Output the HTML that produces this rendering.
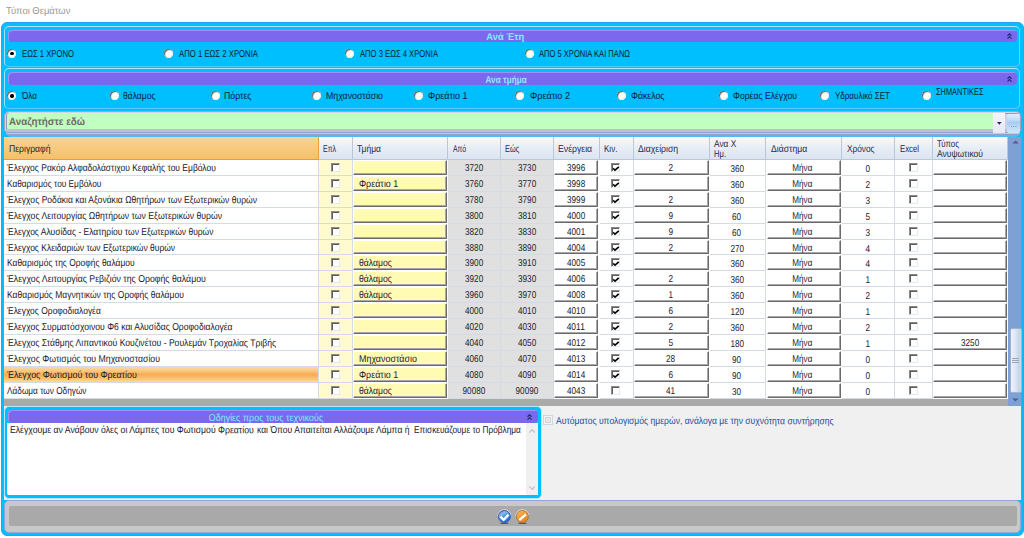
<!DOCTYPE html>
<html lang="el"><head><meta charset="utf-8"><title>Τύποι Θεμάτων</title>
<style>
html,body{margin:0;padding:0;background:#fff;}
body{width:1024px;height:538px;position:relative;overflow:hidden;font-family:"Liberation Sans",sans-serif;font-size:10px;color:#20202e;}
div{box-sizing:border-box;}
.abs,.th,.c,.cb,.rd,.t{position:absolute;}
.t{white-space:nowrap;transform-origin:0 0;line-height:12px;}
#frame{left:1px;top:22.3px;width:1022.6px;height:514px;background:#00bfff;border:1px solid #2aa5e8;border-radius:6px;}
.grp{border:1px solid;border-color:#b2e5fa #74d1f6 #58c9f5 #a2dff9;border-radius:5px;}
.hdr{background:#7b68ee;border-radius:4px;box-shadow:inset 1px 1px 0 rgba(255,255,255,.28);}
.chev{position:absolute;}
.rd{width:9px;height:9px;border-radius:50%;background:#fff;box-shadow:inset 1px 1px 1px #5a5a5a,inset -1px -1px 1px #f0f0f0;}
.rd i{position:absolute;left:3px;top:3px;width:3.4px;height:3.4px;border-radius:50%;background:#000;}
#search{left:4px;top:110.5px;width:1017px;height:23.5px;border:1px solid #9ea3bf;border-radius:5px;background:#cdd1e4;box-shadow:inset 0 0 0 1px #d3d6e7,inset 0 0 0 2px #969cbc;}
#gridbg{left:4px;top:136.8px;width:1017.3px;height:268.9px;background:#aaa;}
.th{background:linear-gradient(#f7f9fc,#e4ebf5 60%,#dbe4f0);border-right:1px solid #b9c7da;border-bottom:1px solid #b9c7da;}
.th.first{background:linear-gradient(#f9d295,#f7ca7f 50%,#f5c16a);border-right:1px solid #ee9c40;border-bottom:1px solid #ec9a3c;}
.c{background:#fff;border-right:1px solid #d5dbe6;border-bottom:1px solid #d5dbe6;}
.c.yel{background:#fffbcf;}
.c.gray{background:#e0e0e0;}
.c.btn{background:#fff;border:1px solid;border-color:#fff #6a6a6a #6a6a6a #fff;box-shadow:inset -1px -1px 0 #a8a8a8;}
.c.ybtn{background:#fffab4;}
.c.sel{background:linear-gradient(#fad9a4,#f9c67e 28%,#f7ab52 50%,#f8bf68 72%,#fbdc93);}
.cb{width:9.3px;height:9px;background:#fff;border:1px solid;border-color:#8c8c8c #e8e8e8 #e8e8e8 #8c8c8c;box-shadow:inset 1px 1px 0 #5c5c5c;}
.cb svg{position:absolute;left:0px;top:1.8px;}
</style></head><body>
<div id="frame" class="abs"></div>
<div class="abs grp" style="left:4px;top:25.8px;width:1016px;height:41px"></div>
<div class="abs hdr" style="left:7.8px;top:30.2px;width:1009px;height:11.6px"></div>
<div class="rd" style="left:7.2px;top:48.8px"><i></i></div><span class="t" style="top:48.4px;font-size:10px;line-height:11px;color:#06222e;left:21.7px;transform:scaleX(0.7695) rotate(0.03deg);">ΕΩΣ 1 ΧΡΟΝΟ</span>
<div class="rd" style="left:164.2px;top:48.8px"></div><span class="t" style="top:48.4px;font-size:10px;line-height:11px;color:#06222e;left:178.7px;transform:scaleX(0.7743) rotate(0.03deg);">ΑΠΟ 1 ΕΩΣ 2 ΧΡΟΝΙΑ</span>
<div class="rd" style="left:345.2px;top:48.8px"></div><span class="t" style="top:48.4px;font-size:10px;line-height:11px;color:#06222e;left:359.7px;transform:scaleX(0.7645) rotate(0.03deg);">ΑΠΟ 3 ΕΩΣ 4 ΧΡΟΝΙΑ</span>
<div class="rd" style="left:525.2px;top:48.8px"></div><span class="t" style="top:48.4px;font-size:10px;line-height:11px;color:#06222e;left:539.0px;transform:scaleX(0.7565) rotate(0.03deg);">ΑΠΟ 5 ΧΡΟΝΙΑ ΚΑΙ ΠΑΝΩ</span>
<div class="abs grp" style="left:4px;top:68.3px;width:1016px;height:40.5px"></div>
<div class="abs hdr" style="left:7.8px;top:72.3px;width:1009px;height:12.3px"></div>
<div class="rd" style="left:7.2px;top:91.3px"><i></i></div><span class="t" style="top:89.8px;font-size:10px;line-height:11px;color:#06222e;left:21.7px;transform:scaleX(0.8163) rotate(0.03deg);">Όλα</span>
<div class="rd" style="left:109.5px;top:91.3px"></div><span class="t" style="top:89.8px;font-size:10px;line-height:11px;color:#06222e;left:123.45px;transform:scaleX(0.8525) rotate(0.03deg);">θάλαμος</span>
<div class="rd" style="left:210.7px;top:91.3px"></div><span class="t" style="top:89.8px;font-size:10px;line-height:11px;color:#06222e;left:224.2px;transform:scaleX(0.8713) rotate(0.03deg);">Πόρτες</span>
<div class="rd" style="left:312.09999999999997px;top:91.3px"></div><span class="t" style="top:89.8px;font-size:10px;line-height:11px;color:#06222e;left:325.7px;transform:scaleX(0.8778) rotate(0.03deg);">Μηχανοστάσιο</span>
<div class="rd" style="left:413.7px;top:91.3px"></div><span class="t" style="top:89.8px;font-size:10px;line-height:11px;color:#06222e;left:428.2px;transform:scaleX(0.8980) rotate(0.03deg);">Φρεάτιο 1</span>
<div class="rd" style="left:515.3000000000001px;top:91.3px"></div><span class="t" style="top:89.8px;font-size:10px;line-height:11px;color:#06222e;left:529.7px;transform:scaleX(0.9094) rotate(0.03deg);">Φρεάτιο 2</span>
<div class="rd" style="left:616.7px;top:91.3px"></div><span class="t" style="top:89.8px;font-size:10px;line-height:11px;color:#06222e;left:631.2px;transform:scaleX(0.8712) rotate(0.03deg);">Φάκελος</span>
<div class="rd" style="left:718.5px;top:91.3px"></div><span class="t" style="top:89.8px;font-size:10px;line-height:11px;color:#06222e;left:732.7px;transform:scaleX(0.8623) rotate(0.03deg);">Φορέας Ελέγχου</span>
<div class="rd" style="left:820.2px;top:91.3px"></div><span class="t" style="top:89.8px;font-size:10px;line-height:11px;color:#06222e;left:834.7px;transform:scaleX(0.8020) rotate(0.03deg);">Υδραυλικό ΣΕΤ</span>
<div class="rd" style="left:921.9000000000001px;top:91.3px"></div><span class="t" style="top:86.3px;font-size:10px;line-height:11px;color:#06222e;left:935.9000000000001px;transform:scaleX(0.7416) rotate(0.03deg);">ΣΗΜΑΝΤΙΚΕΣ</span>
<div id="search" class="abs"></div>
<div class="abs" style="left:6.8px;top:113.3px;width:986.7px;height:15.7px;background:#c1ffc1;border-radius:3px 0 0 3px"></div>
<div class="abs" style="left:5.5px;top:128.9px;width:1014.5px;height:7.9px;border-radius:0 0 5px 5px;background:linear-gradient(#b9c0da 0,#b9c0da 33%,#8ea2d4 35%,#8ea2d4 51%,#c3c9de 53%,#c3c9de 66%,#8ea2d4 68%,#8ea2d4 80%,#5cbdec 90%,#2cc1f8 100%)"></div>
<div id="gridbg" class="abs"></div>
<div class="abs" style="left:4px;top:160px;width:1004px;height:238.5px;background:#fff"></div>
<div class="th first" style="left:4px;top:136.8px;width:315px;height:23.19999999999999px;"></div>
<span class="t" style="top:143.0px;font-size:10px;line-height:11px;color:#2a2222;left:8.7px;transform:scaleX(0.8626) rotate(0.03deg);">Περιγραφή</span>
<div class="th" style="left:319px;top:136.8px;width:34px;height:23.19999999999999px;"></div>
<span class="t" style="top:143.0px;font-size:10px;line-height:11px;color:#1c2a4a;left:323px;transform:scaleX(0.6997) rotate(0.03deg);">Επλ</span>
<div class="th" style="left:353px;top:136.8px;width:95px;height:23.19999999999999px;"></div>
<span class="t" style="top:143.0px;font-size:10px;line-height:11px;color:#1c2a4a;left:357px;transform:scaleX(0.8496) rotate(0.03deg);">Τμήμα</span>
<div class="th" style="left:448px;top:136.8px;width:52.5px;height:23.19999999999999px;"></div>
<span class="t" style="top:143.0px;font-size:10px;line-height:11px;color:#1c2a4a;left:452.7px;transform:scaleX(0.6844) rotate(0.03deg);">Από</span>
<div class="th" style="left:500.5px;top:136.8px;width:53.0px;height:23.19999999999999px;"></div>
<span class="t" style="top:143.0px;font-size:10px;line-height:11px;color:#1c2a4a;left:505.4px;transform:scaleX(0.7411) rotate(0.03deg);">Εώς</span>
<div class="th" style="left:553.5px;top:136.8px;width:46.200000000000045px;height:23.19999999999999px;"></div>
<span class="t" style="top:143.0px;font-size:10px;line-height:11px;color:#1c2a4a;left:558.2px;transform:scaleX(0.8681) rotate(0.03deg);">Ενέργεια</span>
<div class="th" style="left:599.7px;top:136.8px;width:34.299999999999955px;height:23.19999999999999px;"></div>
<span class="t" style="top:143.0px;font-size:10px;line-height:11px;color:#1c2a4a;left:603.7px;transform:scaleX(0.8037) rotate(0.03deg);">Κιν.</span>
<div class="th" style="left:634px;top:136.8px;width:76px;height:23.19999999999999px;"></div>
<span class="t" style="top:143.0px;font-size:10px;line-height:11px;color:#1c2a4a;left:638.2px;transform:scaleX(0.8689) rotate(0.03deg);">Διαχείριση</span>
<div class="th" style="left:710px;top:136.8px;width:56.200000000000045px;height:23.19999999999999px;"></div>
<span class="t" style="top:137.60000000000002px;font-size:10px;line-height:11px;color:#1c2a4a;left:714px;transform:scaleX(0.8309) rotate(0.03deg);">Ανα Χ</span>
<span class="t" style="top:148.10000000000002px;font-size:10px;line-height:11px;color:#1c2a4a;left:714px;transform:scaleX(0.7611) rotate(0.03deg);">Ημ.</span>
<div class="th" style="left:766.2px;top:136.8px;width:75.79999999999995px;height:23.19999999999999px;"></div>
<span class="t" style="top:143.0px;font-size:10px;line-height:11px;color:#1c2a4a;left:771px;transform:scaleX(0.8659) rotate(0.03deg);">Διάστημα</span>
<div class="th" style="left:842px;top:136.8px;width:53.299999999999955px;height:23.19999999999999px;"></div>
<span class="t" style="top:143.0px;font-size:10px;line-height:11px;color:#1c2a4a;left:846.7px;transform:scaleX(0.8255) rotate(0.03deg);">Χρόνος</span>
<div class="th" style="left:895.3px;top:136.8px;width:37.700000000000045px;height:23.19999999999999px;"></div>
<span class="t" style="top:143.0px;font-size:10px;line-height:11px;color:#1c2a4a;left:900px;transform:scaleX(0.7770) rotate(0.03deg);">Excel</span>
<div class="th" style="left:933px;top:136.8px;width:75.39999999999998px;height:23.19999999999999px;"></div>
<span class="t" style="top:137.60000000000002px;font-size:10px;line-height:11px;color:#1c2a4a;left:937px;transform:scaleX(0.7897) rotate(0.03deg);">Τύπος</span>
<span class="t" style="top:148.10000000000002px;font-size:10px;line-height:11px;color:#1c2a4a;left:937px;transform:scaleX(0.8543) rotate(0.03deg);">Ανυψωτικού</span>
<div class="c desc" style="left:4px;top:160px;width:315px;height:16px;"></div>
<div class="c yel" style="left:319px;top:160px;width:34px;height:16px;"></div>
<div class="c btn ybtn" style="left:353.3px;top:160.2px;width:93.39999999999998px;height:15.100000000000023px;"></div>
<div class="c gray" style="left:448px;top:160px;width:52.5px;height:16px;"></div>
<div class="c gray" style="left:500.5px;top:160px;width:53.0px;height:16px;"></div>
<div class="c btn" style="left:553.8px;top:160.2px;width:44.600000000000136px;height:15.100000000000023px;"></div>
<div class="c" style="left:599.7px;top:160px;width:34.299999999999955px;height:16px;"></div>
<div class="c btn" style="left:634.3px;top:160.2px;width:74.40000000000009px;height:15.100000000000023px;"></div>
<div class="c" style="left:710px;top:160px;width:56.200000000000045px;height:16px;"></div>
<div class="c btn" style="left:766.5px;top:160.2px;width:74.20000000000005px;height:15.100000000000023px;"></div>
<div class="c" style="left:842px;top:160px;width:53.299999999999955px;height:16px;"></div>
<div class="c" style="left:895.3px;top:160px;width:37.700000000000045px;height:16px;"></div>
<div class="c btn" style="left:933.3px;top:160.2px;width:73.80000000000007px;height:15.100000000000023px;"></div>
<span class="t" style="top:162.1px;font-size:10px;line-height:11px;left:7.2px;transform:scaleX(0.8477) rotate(0.03deg);">Έλεγχος Ρακόρ Αλφαδολάστιχου Κεφαλής του Εμβόλου</span>
<span class="t" style="top:162.4px;font-size:10px;line-height:11px;left:463.18px;transform-origin:50% 0;transform:scaleX(0.8180) rotate(0.03deg);">3720</span>
<span class="t" style="top:162.4px;font-size:10px;line-height:11px;left:516.17px;transform-origin:50% 0;transform:scaleX(0.8180) rotate(0.03deg);">3730</span>
<span class="t" style="top:161.9px;font-size:10px;line-height:11px;left:565.08px;transform-origin:50% 0;transform:scaleX(0.8180) rotate(0.03deg);">3996</span>
<span class="t" style="top:161.9px;font-size:10px;line-height:11px;left:667.82px;transform-origin:50% 0;transform:scaleX(0.8180) rotate(0.03deg);">2</span>
<span class="t" style="top:162.79999999999998px;font-size:10px;line-height:11px;left:728.66px;transform-origin:50% 0;transform:scaleX(0.8180) rotate(0.03deg);">360</span>
<span class="t" style="top:162.29999999999998px;font-size:10px;line-height:11px;left:790.16px;transform-origin:50% 0;transform:scaleX(0.8101) rotate(0.03deg);">Μήνα</span>
<span class="t" style="top:162.79999999999998px;font-size:10px;line-height:11px;left:865.22px;transform-origin:50% 0;transform:scaleX(0.8180) rotate(0.03deg);">0</span>
<div class="cb" style="left:330.5px;top:163px"></div>
<div class="cb" style="left:611px;top:163px"><svg width="7.6" height="6" viewBox="0 0 7.6 6"><path d="M1.2 2.4 L3 4.2 L6.8 0.8" stroke="#000" stroke-width="1.6" fill="none"/></svg></div>
<div class="cb" style="left:908.5px;top:163px"></div>
<div class="c desc" style="left:4px;top:176px;width:315px;height:16px;"></div>
<div class="c yel" style="left:319px;top:176px;width:34px;height:16px;"></div>
<div class="c btn ybtn" style="left:353.3px;top:176.2px;width:93.39999999999998px;height:15.100000000000023px;"></div>
<div class="c gray" style="left:448px;top:176px;width:52.5px;height:16px;"></div>
<div class="c gray" style="left:500.5px;top:176px;width:53.0px;height:16px;"></div>
<div class="c btn" style="left:553.8px;top:176.2px;width:44.600000000000136px;height:15.100000000000023px;"></div>
<div class="c" style="left:599.7px;top:176px;width:34.299999999999955px;height:16px;"></div>
<div class="c btn" style="left:634.3px;top:176.2px;width:74.40000000000009px;height:15.100000000000023px;"></div>
<div class="c" style="left:710px;top:176px;width:56.200000000000045px;height:16px;"></div>
<div class="c btn" style="left:766.5px;top:176.2px;width:74.20000000000005px;height:15.100000000000023px;"></div>
<div class="c" style="left:842px;top:176px;width:53.299999999999955px;height:16px;"></div>
<div class="c" style="left:895.3px;top:176px;width:37.700000000000045px;height:16px;"></div>
<div class="c btn" style="left:933.3px;top:176.2px;width:73.80000000000007px;height:15.100000000000023px;"></div>
<span class="t" style="top:178.1px;font-size:10px;line-height:11px;left:7.2px;transform:scaleX(0.8291) rotate(0.03deg);">Καθαρισμός του Εμβόλου</span>
<span class="t" style="top:178.0px;font-size:10px;line-height:11px;left:358.5px;transform:scaleX(0.8935) rotate(0.03deg);">Φρεάτιο 1</span>
<span class="t" style="top:178.4px;font-size:10px;line-height:11px;left:463.18px;transform-origin:50% 0;transform:scaleX(0.8180) rotate(0.03deg);">3760</span>
<span class="t" style="top:178.4px;font-size:10px;line-height:11px;left:516.17px;transform-origin:50% 0;transform:scaleX(0.8180) rotate(0.03deg);">3770</span>
<span class="t" style="top:177.9px;font-size:10px;line-height:11px;left:565.08px;transform-origin:50% 0;transform:scaleX(0.8180) rotate(0.03deg);">3998</span>
<span class="t" style="top:178.79999999999998px;font-size:10px;line-height:11px;left:728.66px;transform-origin:50% 0;transform:scaleX(0.8180) rotate(0.03deg);">360</span>
<span class="t" style="top:178.29999999999998px;font-size:10px;line-height:11px;left:790.16px;transform-origin:50% 0;transform:scaleX(0.8101) rotate(0.03deg);">Μήνα</span>
<span class="t" style="top:178.79999999999998px;font-size:10px;line-height:11px;left:865.22px;transform-origin:50% 0;transform:scaleX(0.8180) rotate(0.03deg);">2</span>
<div class="cb" style="left:330.5px;top:179px"></div>
<div class="cb" style="left:611px;top:179px"><svg width="7.6" height="6" viewBox="0 0 7.6 6"><path d="M1.2 2.4 L3 4.2 L6.8 0.8" stroke="#000" stroke-width="1.6" fill="none"/></svg></div>
<div class="cb" style="left:908.5px;top:179px"></div>
<div class="c desc" style="left:4px;top:192px;width:315px;height:16px;"></div>
<div class="c yel" style="left:319px;top:192px;width:34px;height:16px;"></div>
<div class="c btn ybtn" style="left:353.3px;top:192.2px;width:93.39999999999998px;height:15.100000000000023px;"></div>
<div class="c gray" style="left:448px;top:192px;width:52.5px;height:16px;"></div>
<div class="c gray" style="left:500.5px;top:192px;width:53.0px;height:16px;"></div>
<div class="c btn" style="left:553.8px;top:192.2px;width:44.600000000000136px;height:15.100000000000023px;"></div>
<div class="c" style="left:599.7px;top:192px;width:34.299999999999955px;height:16px;"></div>
<div class="c btn" style="left:634.3px;top:192.2px;width:74.40000000000009px;height:15.100000000000023px;"></div>
<div class="c" style="left:710px;top:192px;width:56.200000000000045px;height:16px;"></div>
<div class="c btn" style="left:766.5px;top:192.2px;width:74.20000000000005px;height:15.100000000000023px;"></div>
<div class="c" style="left:842px;top:192px;width:53.299999999999955px;height:16px;"></div>
<div class="c" style="left:895.3px;top:192px;width:37.700000000000045px;height:16px;"></div>
<div class="c btn" style="left:933.3px;top:192.2px;width:73.80000000000007px;height:15.100000000000023px;"></div>
<span class="t" style="top:194.1px;font-size:10px;line-height:11px;left:7.2px;transform:scaleX(0.8567) rotate(0.03deg);">Έλεγχος Ροδάκια και Αξονάκια Ωθητήρων των Εξωτερικών θυρών</span>
<span class="t" style="top:194.4px;font-size:10px;line-height:11px;left:463.18px;transform-origin:50% 0;transform:scaleX(0.8180) rotate(0.03deg);">3780</span>
<span class="t" style="top:194.4px;font-size:10px;line-height:11px;left:516.17px;transform-origin:50% 0;transform:scaleX(0.8180) rotate(0.03deg);">3790</span>
<span class="t" style="top:193.9px;font-size:10px;line-height:11px;left:565.08px;transform-origin:50% 0;transform:scaleX(0.8180) rotate(0.03deg);">3999</span>
<span class="t" style="top:193.9px;font-size:10px;line-height:11px;left:667.82px;transform-origin:50% 0;transform:scaleX(0.8180) rotate(0.03deg);">2</span>
<span class="t" style="top:194.79999999999998px;font-size:10px;line-height:11px;left:728.66px;transform-origin:50% 0;transform:scaleX(0.8180) rotate(0.03deg);">360</span>
<span class="t" style="top:194.29999999999998px;font-size:10px;line-height:11px;left:790.16px;transform-origin:50% 0;transform:scaleX(0.8101) rotate(0.03deg);">Μήνα</span>
<span class="t" style="top:194.79999999999998px;font-size:10px;line-height:11px;left:865.22px;transform-origin:50% 0;transform:scaleX(0.8180) rotate(0.03deg);">3</span>
<div class="cb" style="left:330.5px;top:195px"></div>
<div class="cb" style="left:611px;top:195px"><svg width="7.6" height="6" viewBox="0 0 7.6 6"><path d="M1.2 2.4 L3 4.2 L6.8 0.8" stroke="#000" stroke-width="1.6" fill="none"/></svg></div>
<div class="cb" style="left:908.5px;top:195px"></div>
<div class="c desc" style="left:4px;top:208px;width:315px;height:16px;"></div>
<div class="c yel" style="left:319px;top:208px;width:34px;height:16px;"></div>
<div class="c btn ybtn" style="left:353.3px;top:208.2px;width:93.39999999999998px;height:15.100000000000023px;"></div>
<div class="c gray" style="left:448px;top:208px;width:52.5px;height:16px;"></div>
<div class="c gray" style="left:500.5px;top:208px;width:53.0px;height:16px;"></div>
<div class="c btn" style="left:553.8px;top:208.2px;width:44.600000000000136px;height:15.100000000000023px;"></div>
<div class="c" style="left:599.7px;top:208px;width:34.299999999999955px;height:16px;"></div>
<div class="c btn" style="left:634.3px;top:208.2px;width:74.40000000000009px;height:15.100000000000023px;"></div>
<div class="c" style="left:710px;top:208px;width:56.200000000000045px;height:16px;"></div>
<div class="c btn" style="left:766.5px;top:208.2px;width:74.20000000000005px;height:15.100000000000023px;"></div>
<div class="c" style="left:842px;top:208px;width:53.299999999999955px;height:16px;"></div>
<div class="c" style="left:895.3px;top:208px;width:37.700000000000045px;height:16px;"></div>
<div class="c btn" style="left:933.3px;top:208.2px;width:73.80000000000007px;height:15.100000000000023px;"></div>
<span class="t" style="top:210.1px;font-size:10px;line-height:11px;left:7.2px;transform:scaleX(0.8660) rotate(0.03deg);">Έλεγχος Λειτουργίας Ωθητήρων των Εξωτερικών θυρών</span>
<span class="t" style="top:210.4px;font-size:10px;line-height:11px;left:463.18px;transform-origin:50% 0;transform:scaleX(0.8180) rotate(0.03deg);">3800</span>
<span class="t" style="top:210.4px;font-size:10px;line-height:11px;left:516.17px;transform-origin:50% 0;transform:scaleX(0.8180) rotate(0.03deg);">3810</span>
<span class="t" style="top:209.9px;font-size:10px;line-height:11px;left:565.08px;transform-origin:50% 0;transform:scaleX(0.8180) rotate(0.03deg);">4000</span>
<span class="t" style="top:209.9px;font-size:10px;line-height:11px;left:667.82px;transform-origin:50% 0;transform:scaleX(0.8180) rotate(0.03deg);">9</span>
<span class="t" style="top:210.79999999999998px;font-size:10px;line-height:11px;left:731.44px;transform-origin:50% 0;transform:scaleX(0.8180) rotate(0.03deg);">60</span>
<span class="t" style="top:210.29999999999998px;font-size:10px;line-height:11px;left:790.16px;transform-origin:50% 0;transform:scaleX(0.8101) rotate(0.03deg);">Μήνα</span>
<span class="t" style="top:210.79999999999998px;font-size:10px;line-height:11px;left:865.22px;transform-origin:50% 0;transform:scaleX(0.8180) rotate(0.03deg);">5</span>
<div class="cb" style="left:330.5px;top:211px"></div>
<div class="cb" style="left:611px;top:211px"><svg width="7.6" height="6" viewBox="0 0 7.6 6"><path d="M1.2 2.4 L3 4.2 L6.8 0.8" stroke="#000" stroke-width="1.6" fill="none"/></svg></div>
<div class="cb" style="left:908.5px;top:211px"></div>
<div class="c desc" style="left:4px;top:224px;width:315px;height:16px;"></div>
<div class="c yel" style="left:319px;top:224px;width:34px;height:16px;"></div>
<div class="c btn ybtn" style="left:353.3px;top:224.2px;width:93.39999999999998px;height:15.100000000000023px;"></div>
<div class="c gray" style="left:448px;top:224px;width:52.5px;height:16px;"></div>
<div class="c gray" style="left:500.5px;top:224px;width:53.0px;height:16px;"></div>
<div class="c btn" style="left:553.8px;top:224.2px;width:44.600000000000136px;height:15.100000000000023px;"></div>
<div class="c" style="left:599.7px;top:224px;width:34.299999999999955px;height:16px;"></div>
<div class="c btn" style="left:634.3px;top:224.2px;width:74.40000000000009px;height:15.100000000000023px;"></div>
<div class="c" style="left:710px;top:224px;width:56.200000000000045px;height:16px;"></div>
<div class="c btn" style="left:766.5px;top:224.2px;width:74.20000000000005px;height:15.100000000000023px;"></div>
<div class="c" style="left:842px;top:224px;width:53.299999999999955px;height:16px;"></div>
<div class="c" style="left:895.3px;top:224px;width:37.700000000000045px;height:16px;"></div>
<div class="c btn" style="left:933.3px;top:224.2px;width:73.80000000000007px;height:15.100000000000023px;"></div>
<span class="t" style="top:226.1px;font-size:10px;line-height:11px;left:7.2px;transform:scaleX(0.8488) rotate(0.03deg);">Έλεγχος Αλυσίδας - Ελατηρίου των Εξωτερικών θυρών</span>
<span class="t" style="top:226.4px;font-size:10px;line-height:11px;left:463.18px;transform-origin:50% 0;transform:scaleX(0.8180) rotate(0.03deg);">3820</span>
<span class="t" style="top:226.4px;font-size:10px;line-height:11px;left:516.17px;transform-origin:50% 0;transform:scaleX(0.8180) rotate(0.03deg);">3830</span>
<span class="t" style="top:225.9px;font-size:10px;line-height:11px;left:565.08px;transform-origin:50% 0;transform:scaleX(0.8180) rotate(0.03deg);">4001</span>
<span class="t" style="top:225.9px;font-size:10px;line-height:11px;left:667.82px;transform-origin:50% 0;transform:scaleX(0.8180) rotate(0.03deg);">9</span>
<span class="t" style="top:226.79999999999998px;font-size:10px;line-height:11px;left:731.44px;transform-origin:50% 0;transform:scaleX(0.8180) rotate(0.03deg);">60</span>
<span class="t" style="top:226.29999999999998px;font-size:10px;line-height:11px;left:790.16px;transform-origin:50% 0;transform:scaleX(0.8101) rotate(0.03deg);">Μήνα</span>
<span class="t" style="top:226.79999999999998px;font-size:10px;line-height:11px;left:865.22px;transform-origin:50% 0;transform:scaleX(0.8180) rotate(0.03deg);">3</span>
<div class="cb" style="left:330.5px;top:227px"></div>
<div class="cb" style="left:611px;top:227px"><svg width="7.6" height="6" viewBox="0 0 7.6 6"><path d="M1.2 2.4 L3 4.2 L6.8 0.8" stroke="#000" stroke-width="1.6" fill="none"/></svg></div>
<div class="cb" style="left:908.5px;top:227px"></div>
<div class="c desc" style="left:4px;top:240px;width:315px;height:15px;"></div>
<div class="c yel" style="left:319px;top:240px;width:34px;height:15px;"></div>
<div class="c btn ybtn" style="left:353.3px;top:240.2px;width:93.39999999999998px;height:14.100000000000023px;"></div>
<div class="c gray" style="left:448px;top:240px;width:52.5px;height:15px;"></div>
<div class="c gray" style="left:500.5px;top:240px;width:53.0px;height:15px;"></div>
<div class="c btn" style="left:553.8px;top:240.2px;width:44.600000000000136px;height:14.100000000000023px;"></div>
<div class="c" style="left:599.7px;top:240px;width:34.299999999999955px;height:15px;"></div>
<div class="c btn" style="left:634.3px;top:240.2px;width:74.40000000000009px;height:14.100000000000023px;"></div>
<div class="c" style="left:710px;top:240px;width:56.200000000000045px;height:15px;"></div>
<div class="c btn" style="left:766.5px;top:240.2px;width:74.20000000000005px;height:14.100000000000023px;"></div>
<div class="c" style="left:842px;top:240px;width:53.299999999999955px;height:15px;"></div>
<div class="c" style="left:895.3px;top:240px;width:37.700000000000045px;height:15px;"></div>
<div class="c btn" style="left:933.3px;top:240.2px;width:73.80000000000007px;height:14.100000000000023px;"></div>
<span class="t" style="top:242.1px;font-size:10px;line-height:11px;left:7.2px;transform:scaleX(0.8483) rotate(0.03deg);">Έλεγχος Κλειδαριών των Εξωτερικών θυρών</span>
<span class="t" style="top:242.4px;font-size:10px;line-height:11px;left:463.18px;transform-origin:50% 0;transform:scaleX(0.8180) rotate(0.03deg);">3880</span>
<span class="t" style="top:242.4px;font-size:10px;line-height:11px;left:516.17px;transform-origin:50% 0;transform:scaleX(0.8180) rotate(0.03deg);">3890</span>
<span class="t" style="top:241.9px;font-size:10px;line-height:11px;left:565.08px;transform-origin:50% 0;transform:scaleX(0.8180) rotate(0.03deg);">4004</span>
<span class="t" style="top:241.9px;font-size:10px;line-height:11px;left:667.82px;transform-origin:50% 0;transform:scaleX(0.8180) rotate(0.03deg);">2</span>
<span class="t" style="top:242.79999999999998px;font-size:10px;line-height:11px;left:728.66px;transform-origin:50% 0;transform:scaleX(0.8180) rotate(0.03deg);">270</span>
<span class="t" style="top:242.29999999999998px;font-size:10px;line-height:11px;left:790.16px;transform-origin:50% 0;transform:scaleX(0.8101) rotate(0.03deg);">Μήνα</span>
<span class="t" style="top:242.79999999999998px;font-size:10px;line-height:11px;left:865.22px;transform-origin:50% 0;transform:scaleX(0.8180) rotate(0.03deg);">4</span>
<div class="cb" style="left:330.5px;top:243px"></div>
<div class="cb" style="left:611px;top:243px"><svg width="7.6" height="6" viewBox="0 0 7.6 6"><path d="M1.2 2.4 L3 4.2 L6.8 0.8" stroke="#000" stroke-width="1.6" fill="none"/></svg></div>
<div class="cb" style="left:908.5px;top:243px"></div>
<div class="c desc" style="left:4px;top:255px;width:315px;height:16px;"></div>
<div class="c yel" style="left:319px;top:255px;width:34px;height:16px;"></div>
<div class="c btn ybtn" style="left:353.3px;top:255.2px;width:93.39999999999998px;height:15.100000000000023px;"></div>
<div class="c gray" style="left:448px;top:255px;width:52.5px;height:16px;"></div>
<div class="c gray" style="left:500.5px;top:255px;width:53.0px;height:16px;"></div>
<div class="c btn" style="left:553.8px;top:255.2px;width:44.600000000000136px;height:15.100000000000023px;"></div>
<div class="c" style="left:599.7px;top:255px;width:34.299999999999955px;height:16px;"></div>
<div class="c btn" style="left:634.3px;top:255.2px;width:74.40000000000009px;height:15.100000000000023px;"></div>
<div class="c" style="left:710px;top:255px;width:56.200000000000045px;height:16px;"></div>
<div class="c btn" style="left:766.5px;top:255.2px;width:74.20000000000005px;height:15.100000000000023px;"></div>
<div class="c" style="left:842px;top:255px;width:53.299999999999955px;height:16px;"></div>
<div class="c" style="left:895.3px;top:255px;width:37.700000000000045px;height:16px;"></div>
<div class="c btn" style="left:933.3px;top:255.2px;width:73.80000000000007px;height:15.100000000000023px;"></div>
<span class="t" style="top:257.1px;font-size:10px;line-height:11px;left:7.2px;transform:scaleX(0.8437) rotate(0.03deg);">Καθαρισμός της Οροφής θαλάμου</span>
<span class="t" style="top:257.0px;font-size:10px;line-height:11px;left:358.5px;transform:scaleX(0.8656) rotate(0.03deg);">θάλαμος</span>
<span class="t" style="top:257.40000000000003px;font-size:10px;line-height:11px;left:463.18px;transform-origin:50% 0;transform:scaleX(0.8180) rotate(0.03deg);">3900</span>
<span class="t" style="top:257.40000000000003px;font-size:10px;line-height:11px;left:516.17px;transform-origin:50% 0;transform:scaleX(0.8180) rotate(0.03deg);">3910</span>
<span class="t" style="top:256.90000000000003px;font-size:10px;line-height:11px;left:565.08px;transform-origin:50% 0;transform:scaleX(0.8180) rotate(0.03deg);">4005</span>
<span class="t" style="top:257.8px;font-size:10px;line-height:11px;left:728.66px;transform-origin:50% 0;transform:scaleX(0.8180) rotate(0.03deg);">360</span>
<span class="t" style="top:257.3px;font-size:10px;line-height:11px;left:790.16px;transform-origin:50% 0;transform:scaleX(0.8101) rotate(0.03deg);">Μήνα</span>
<span class="t" style="top:257.8px;font-size:10px;line-height:11px;left:865.22px;transform-origin:50% 0;transform:scaleX(0.8180) rotate(0.03deg);">4</span>
<div class="cb" style="left:330.5px;top:258px"></div>
<div class="cb" style="left:611px;top:258px"><svg width="7.6" height="6" viewBox="0 0 7.6 6"><path d="M1.2 2.4 L3 4.2 L6.8 0.8" stroke="#000" stroke-width="1.6" fill="none"/></svg></div>
<div class="cb" style="left:908.5px;top:258px"></div>
<div class="c desc" style="left:4px;top:271px;width:315px;height:16px;"></div>
<div class="c yel" style="left:319px;top:271px;width:34px;height:16px;"></div>
<div class="c btn ybtn" style="left:353.3px;top:271.2px;width:93.39999999999998px;height:15.100000000000023px;"></div>
<div class="c gray" style="left:448px;top:271px;width:52.5px;height:16px;"></div>
<div class="c gray" style="left:500.5px;top:271px;width:53.0px;height:16px;"></div>
<div class="c btn" style="left:553.8px;top:271.2px;width:44.600000000000136px;height:15.100000000000023px;"></div>
<div class="c" style="left:599.7px;top:271px;width:34.299999999999955px;height:16px;"></div>
<div class="c btn" style="left:634.3px;top:271.2px;width:74.40000000000009px;height:15.100000000000023px;"></div>
<div class="c" style="left:710px;top:271px;width:56.200000000000045px;height:16px;"></div>
<div class="c btn" style="left:766.5px;top:271.2px;width:74.20000000000005px;height:15.100000000000023px;"></div>
<div class="c" style="left:842px;top:271px;width:53.299999999999955px;height:16px;"></div>
<div class="c" style="left:895.3px;top:271px;width:37.700000000000045px;height:16px;"></div>
<div class="c btn" style="left:933.3px;top:271.2px;width:73.80000000000007px;height:15.100000000000023px;"></div>
<span class="t" style="top:273.1px;font-size:10px;line-height:11px;left:7.2px;transform:scaleX(0.8726) rotate(0.03deg);">Έλεγχος Λειτουργίας Ρεβιζιόν της Οροφής θαλάμου</span>
<span class="t" style="top:273.0px;font-size:10px;line-height:11px;left:358.5px;transform:scaleX(0.8656) rotate(0.03deg);">θάλαμος</span>
<span class="t" style="top:273.40000000000003px;font-size:10px;line-height:11px;left:463.18px;transform-origin:50% 0;transform:scaleX(0.8180) rotate(0.03deg);">3920</span>
<span class="t" style="top:273.40000000000003px;font-size:10px;line-height:11px;left:516.17px;transform-origin:50% 0;transform:scaleX(0.8180) rotate(0.03deg);">3930</span>
<span class="t" style="top:272.90000000000003px;font-size:10px;line-height:11px;left:565.08px;transform-origin:50% 0;transform:scaleX(0.8180) rotate(0.03deg);">4006</span>
<span class="t" style="top:272.90000000000003px;font-size:10px;line-height:11px;left:667.82px;transform-origin:50% 0;transform:scaleX(0.8180) rotate(0.03deg);">2</span>
<span class="t" style="top:273.8px;font-size:10px;line-height:11px;left:728.66px;transform-origin:50% 0;transform:scaleX(0.8180) rotate(0.03deg);">360</span>
<span class="t" style="top:273.3px;font-size:10px;line-height:11px;left:790.16px;transform-origin:50% 0;transform:scaleX(0.8101) rotate(0.03deg);">Μήνα</span>
<span class="t" style="top:273.8px;font-size:10px;line-height:11px;left:865.22px;transform-origin:50% 0;transform:scaleX(0.8180) rotate(0.03deg);">1</span>
<div class="cb" style="left:330.5px;top:274px"></div>
<div class="cb" style="left:611px;top:274px"><svg width="7.6" height="6" viewBox="0 0 7.6 6"><path d="M1.2 2.4 L3 4.2 L6.8 0.8" stroke="#000" stroke-width="1.6" fill="none"/></svg></div>
<div class="cb" style="left:908.5px;top:274px"></div>
<div class="c desc" style="left:4px;top:287px;width:315px;height:16px;"></div>
<div class="c yel" style="left:319px;top:287px;width:34px;height:16px;"></div>
<div class="c btn ybtn" style="left:353.3px;top:287.2px;width:93.39999999999998px;height:15.100000000000023px;"></div>
<div class="c gray" style="left:448px;top:287px;width:52.5px;height:16px;"></div>
<div class="c gray" style="left:500.5px;top:287px;width:53.0px;height:16px;"></div>
<div class="c btn" style="left:553.8px;top:287.2px;width:44.600000000000136px;height:15.100000000000023px;"></div>
<div class="c" style="left:599.7px;top:287px;width:34.299999999999955px;height:16px;"></div>
<div class="c btn" style="left:634.3px;top:287.2px;width:74.40000000000009px;height:15.100000000000023px;"></div>
<div class="c" style="left:710px;top:287px;width:56.200000000000045px;height:16px;"></div>
<div class="c btn" style="left:766.5px;top:287.2px;width:74.20000000000005px;height:15.100000000000023px;"></div>
<div class="c" style="left:842px;top:287px;width:53.299999999999955px;height:16px;"></div>
<div class="c" style="left:895.3px;top:287px;width:37.700000000000045px;height:16px;"></div>
<div class="c btn" style="left:933.3px;top:287.2px;width:73.80000000000007px;height:15.100000000000023px;"></div>
<span class="t" style="top:289.1px;font-size:10px;line-height:11px;left:7.2px;transform:scaleX(0.8519) rotate(0.03deg);">Καθαρισμός Μαγνητικών της Οροφής θαλάμου</span>
<span class="t" style="top:289.0px;font-size:10px;line-height:11px;left:358.5px;transform:scaleX(0.8656) rotate(0.03deg);">θάλαμος</span>
<span class="t" style="top:289.40000000000003px;font-size:10px;line-height:11px;left:463.18px;transform-origin:50% 0;transform:scaleX(0.8180) rotate(0.03deg);">3960</span>
<span class="t" style="top:289.40000000000003px;font-size:10px;line-height:11px;left:516.17px;transform-origin:50% 0;transform:scaleX(0.8180) rotate(0.03deg);">3970</span>
<span class="t" style="top:288.90000000000003px;font-size:10px;line-height:11px;left:565.08px;transform-origin:50% 0;transform:scaleX(0.8180) rotate(0.03deg);">4008</span>
<span class="t" style="top:288.90000000000003px;font-size:10px;line-height:11px;left:667.82px;transform-origin:50% 0;transform:scaleX(0.8180) rotate(0.03deg);">1</span>
<span class="t" style="top:289.8px;font-size:10px;line-height:11px;left:728.66px;transform-origin:50% 0;transform:scaleX(0.8180) rotate(0.03deg);">360</span>
<span class="t" style="top:289.3px;font-size:10px;line-height:11px;left:790.16px;transform-origin:50% 0;transform:scaleX(0.8101) rotate(0.03deg);">Μήνα</span>
<span class="t" style="top:289.8px;font-size:10px;line-height:11px;left:865.22px;transform-origin:50% 0;transform:scaleX(0.8180) rotate(0.03deg);">2</span>
<div class="cb" style="left:330.5px;top:290px"></div>
<div class="cb" style="left:611px;top:290px"><svg width="7.6" height="6" viewBox="0 0 7.6 6"><path d="M1.2 2.4 L3 4.2 L6.8 0.8" stroke="#000" stroke-width="1.6" fill="none"/></svg></div>
<div class="cb" style="left:908.5px;top:290px"></div>
<div class="c desc" style="left:4px;top:303px;width:315px;height:16px;"></div>
<div class="c yel" style="left:319px;top:303px;width:34px;height:16px;"></div>
<div class="c btn ybtn" style="left:353.3px;top:303.2px;width:93.39999999999998px;height:15.100000000000023px;"></div>
<div class="c gray" style="left:448px;top:303px;width:52.5px;height:16px;"></div>
<div class="c gray" style="left:500.5px;top:303px;width:53.0px;height:16px;"></div>
<div class="c btn" style="left:553.8px;top:303.2px;width:44.600000000000136px;height:15.100000000000023px;"></div>
<div class="c" style="left:599.7px;top:303px;width:34.299999999999955px;height:16px;"></div>
<div class="c btn" style="left:634.3px;top:303.2px;width:74.40000000000009px;height:15.100000000000023px;"></div>
<div class="c" style="left:710px;top:303px;width:56.200000000000045px;height:16px;"></div>
<div class="c btn" style="left:766.5px;top:303.2px;width:74.20000000000005px;height:15.100000000000023px;"></div>
<div class="c" style="left:842px;top:303px;width:53.299999999999955px;height:16px;"></div>
<div class="c" style="left:895.3px;top:303px;width:37.700000000000045px;height:16px;"></div>
<div class="c btn" style="left:933.3px;top:303.2px;width:73.80000000000007px;height:15.100000000000023px;"></div>
<span class="t" style="top:305.1px;font-size:10px;line-height:11px;left:7.2px;transform:scaleX(0.8471) rotate(0.03deg);">Έλεγχος Οροφοδιαλογέα</span>
<span class="t" style="top:305.40000000000003px;font-size:10px;line-height:11px;left:463.18px;transform-origin:50% 0;transform:scaleX(0.8180) rotate(0.03deg);">4000</span>
<span class="t" style="top:305.40000000000003px;font-size:10px;line-height:11px;left:516.17px;transform-origin:50% 0;transform:scaleX(0.8180) rotate(0.03deg);">4010</span>
<span class="t" style="top:304.90000000000003px;font-size:10px;line-height:11px;left:565.08px;transform-origin:50% 0;transform:scaleX(0.8180) rotate(0.03deg);">4010</span>
<span class="t" style="top:304.90000000000003px;font-size:10px;line-height:11px;left:667.82px;transform-origin:50% 0;transform:scaleX(0.8180) rotate(0.03deg);">6</span>
<span class="t" style="top:305.8px;font-size:10px;line-height:11px;left:728.66px;transform-origin:50% 0;transform:scaleX(0.8180) rotate(0.03deg);">120</span>
<span class="t" style="top:305.3px;font-size:10px;line-height:11px;left:790.16px;transform-origin:50% 0;transform:scaleX(0.8101) rotate(0.03deg);">Μήνα</span>
<span class="t" style="top:305.8px;font-size:10px;line-height:11px;left:865.22px;transform-origin:50% 0;transform:scaleX(0.8180) rotate(0.03deg);">1</span>
<div class="cb" style="left:330.5px;top:306px"></div>
<div class="cb" style="left:611px;top:306px"><svg width="7.6" height="6" viewBox="0 0 7.6 6"><path d="M1.2 2.4 L3 4.2 L6.8 0.8" stroke="#000" stroke-width="1.6" fill="none"/></svg></div>
<div class="cb" style="left:908.5px;top:306px"></div>
<div class="c desc" style="left:4px;top:319px;width:315px;height:16px;"></div>
<div class="c yel" style="left:319px;top:319px;width:34px;height:16px;"></div>
<div class="c btn ybtn" style="left:353.3px;top:319.2px;width:93.39999999999998px;height:15.100000000000023px;"></div>
<div class="c gray" style="left:448px;top:319px;width:52.5px;height:16px;"></div>
<div class="c gray" style="left:500.5px;top:319px;width:53.0px;height:16px;"></div>
<div class="c btn" style="left:553.8px;top:319.2px;width:44.600000000000136px;height:15.100000000000023px;"></div>
<div class="c" style="left:599.7px;top:319px;width:34.299999999999955px;height:16px;"></div>
<div class="c btn" style="left:634.3px;top:319.2px;width:74.40000000000009px;height:15.100000000000023px;"></div>
<div class="c" style="left:710px;top:319px;width:56.200000000000045px;height:16px;"></div>
<div class="c btn" style="left:766.5px;top:319.2px;width:74.20000000000005px;height:15.100000000000023px;"></div>
<div class="c" style="left:842px;top:319px;width:53.299999999999955px;height:16px;"></div>
<div class="c" style="left:895.3px;top:319px;width:37.700000000000045px;height:16px;"></div>
<div class="c btn" style="left:933.3px;top:319.2px;width:73.80000000000007px;height:15.100000000000023px;"></div>
<span class="t" style="top:321.1px;font-size:10px;line-height:11px;left:7.2px;transform:scaleX(0.8593) rotate(0.03deg);">Έλεγχος Συρματόσχοινου Φ6 και Αλυσίδας Οροφοδιαλογέα</span>
<span class="t" style="top:321.40000000000003px;font-size:10px;line-height:11px;left:463.18px;transform-origin:50% 0;transform:scaleX(0.8180) rotate(0.03deg);">4020</span>
<span class="t" style="top:321.40000000000003px;font-size:10px;line-height:11px;left:516.17px;transform-origin:50% 0;transform:scaleX(0.8180) rotate(0.03deg);">4030</span>
<span class="t" style="top:320.90000000000003px;font-size:10px;line-height:11px;left:565.44px;transform-origin:50% 0;transform:scaleX(0.8459) rotate(0.03deg);">4011</span>
<span class="t" style="top:320.90000000000003px;font-size:10px;line-height:11px;left:667.82px;transform-origin:50% 0;transform:scaleX(0.8180) rotate(0.03deg);">2</span>
<span class="t" style="top:321.8px;font-size:10px;line-height:11px;left:728.66px;transform-origin:50% 0;transform:scaleX(0.8180) rotate(0.03deg);">360</span>
<span class="t" style="top:321.3px;font-size:10px;line-height:11px;left:790.16px;transform-origin:50% 0;transform:scaleX(0.8101) rotate(0.03deg);">Μήνα</span>
<span class="t" style="top:321.8px;font-size:10px;line-height:11px;left:865.22px;transform-origin:50% 0;transform:scaleX(0.8180) rotate(0.03deg);">2</span>
<div class="cb" style="left:330.5px;top:322px"></div>
<div class="cb" style="left:611px;top:322px"><svg width="7.6" height="6" viewBox="0 0 7.6 6"><path d="M1.2 2.4 L3 4.2 L6.8 0.8" stroke="#000" stroke-width="1.6" fill="none"/></svg></div>
<div class="cb" style="left:908.5px;top:322px"></div>
<div class="c desc" style="left:4px;top:335px;width:315px;height:16px;"></div>
<div class="c yel" style="left:319px;top:335px;width:34px;height:16px;"></div>
<div class="c btn ybtn" style="left:353.3px;top:335.2px;width:93.39999999999998px;height:15.100000000000023px;"></div>
<div class="c gray" style="left:448px;top:335px;width:52.5px;height:16px;"></div>
<div class="c gray" style="left:500.5px;top:335px;width:53.0px;height:16px;"></div>
<div class="c btn" style="left:553.8px;top:335.2px;width:44.600000000000136px;height:15.100000000000023px;"></div>
<div class="c" style="left:599.7px;top:335px;width:34.299999999999955px;height:16px;"></div>
<div class="c btn" style="left:634.3px;top:335.2px;width:74.40000000000009px;height:15.100000000000023px;"></div>
<div class="c" style="left:710px;top:335px;width:56.200000000000045px;height:16px;"></div>
<div class="c btn" style="left:766.5px;top:335.2px;width:74.20000000000005px;height:15.100000000000023px;"></div>
<div class="c" style="left:842px;top:335px;width:53.299999999999955px;height:16px;"></div>
<div class="c" style="left:895.3px;top:335px;width:37.700000000000045px;height:16px;"></div>
<div class="c btn" style="left:933.3px;top:335.2px;width:73.80000000000007px;height:15.100000000000023px;"></div>
<span class="t" style="top:337.1px;font-size:10px;line-height:11px;left:7.2px;transform:scaleX(0.8603) rotate(0.03deg);">Έλεγχος Στάθμης Λιπαντικού Κουζινέτου - Ρουλεμάν Τροχαλίας Τριβής</span>
<span class="t" style="top:337.40000000000003px;font-size:10px;line-height:11px;left:463.18px;transform-origin:50% 0;transform:scaleX(0.8180) rotate(0.03deg);">4040</span>
<span class="t" style="top:337.40000000000003px;font-size:10px;line-height:11px;left:516.17px;transform-origin:50% 0;transform:scaleX(0.8180) rotate(0.03deg);">4050</span>
<span class="t" style="top:336.90000000000003px;font-size:10px;line-height:11px;left:565.08px;transform-origin:50% 0;transform:scaleX(0.8180) rotate(0.03deg);">4012</span>
<span class="t" style="top:336.90000000000003px;font-size:10px;line-height:11px;left:667.82px;transform-origin:50% 0;transform:scaleX(0.8180) rotate(0.03deg);">5</span>
<span class="t" style="top:337.8px;font-size:10px;line-height:11px;left:728.66px;transform-origin:50% 0;transform:scaleX(0.8180) rotate(0.03deg);">180</span>
<span class="t" style="top:337.3px;font-size:10px;line-height:11px;left:790.16px;transform-origin:50% 0;transform:scaleX(0.8101) rotate(0.03deg);">Μήνα</span>
<span class="t" style="top:337.8px;font-size:10px;line-height:11px;left:865.22px;transform-origin:50% 0;transform:scaleX(0.8180) rotate(0.03deg);">1</span>
<span class="t" style="top:336.90000000000003px;font-size:10px;line-height:11px;left:958.88px;transform-origin:50% 0;transform:scaleX(0.8180) rotate(0.03deg);">3250</span>
<div class="cb" style="left:330.5px;top:338px"></div>
<div class="cb" style="left:611px;top:338px"><svg width="7.6" height="6" viewBox="0 0 7.6 6"><path d="M1.2 2.4 L3 4.2 L6.8 0.8" stroke="#000" stroke-width="1.6" fill="none"/></svg></div>
<div class="cb" style="left:908.5px;top:338px"></div>
<div class="c desc" style="left:4px;top:351px;width:315px;height:16px;"></div>
<div class="c yel" style="left:319px;top:351px;width:34px;height:16px;"></div>
<div class="c btn ybtn" style="left:353.3px;top:351.2px;width:93.39999999999998px;height:15.100000000000023px;"></div>
<div class="c gray" style="left:448px;top:351px;width:52.5px;height:16px;"></div>
<div class="c gray" style="left:500.5px;top:351px;width:53.0px;height:16px;"></div>
<div class="c btn" style="left:553.8px;top:351.2px;width:44.600000000000136px;height:15.100000000000023px;"></div>
<div class="c" style="left:599.7px;top:351px;width:34.299999999999955px;height:16px;"></div>
<div class="c btn" style="left:634.3px;top:351.2px;width:74.40000000000009px;height:15.100000000000023px;"></div>
<div class="c" style="left:710px;top:351px;width:56.200000000000045px;height:16px;"></div>
<div class="c btn" style="left:766.5px;top:351.2px;width:74.20000000000005px;height:15.100000000000023px;"></div>
<div class="c" style="left:842px;top:351px;width:53.299999999999955px;height:16px;"></div>
<div class="c" style="left:895.3px;top:351px;width:37.700000000000045px;height:16px;"></div>
<div class="c btn" style="left:933.3px;top:351.2px;width:73.80000000000007px;height:15.100000000000023px;"></div>
<span class="t" style="top:353.1px;font-size:10px;line-height:11px;left:7.2px;transform:scaleX(0.8724) rotate(0.03deg);">Έλεγχος Φωτισμός του Μηχανοστασίου</span>
<span class="t" style="top:353.0px;font-size:10px;line-height:11px;left:358.5px;transform:scaleX(0.8932) rotate(0.03deg);">Μηχανοστάσιο</span>
<span class="t" style="top:353.40000000000003px;font-size:10px;line-height:11px;left:463.18px;transform-origin:50% 0;transform:scaleX(0.8180) rotate(0.03deg);">4060</span>
<span class="t" style="top:353.40000000000003px;font-size:10px;line-height:11px;left:516.17px;transform-origin:50% 0;transform:scaleX(0.8180) rotate(0.03deg);">4070</span>
<span class="t" style="top:352.90000000000003px;font-size:10px;line-height:11px;left:565.08px;transform-origin:50% 0;transform:scaleX(0.8180) rotate(0.03deg);">4013</span>
<span class="t" style="top:352.90000000000003px;font-size:10px;line-height:11px;left:665.04px;transform-origin:50% 0;transform:scaleX(0.8180) rotate(0.03deg);">28</span>
<span class="t" style="top:353.8px;font-size:10px;line-height:11px;left:731.44px;transform-origin:50% 0;transform:scaleX(0.8180) rotate(0.03deg);">90</span>
<span class="t" style="top:353.3px;font-size:10px;line-height:11px;left:790.16px;transform-origin:50% 0;transform:scaleX(0.8101) rotate(0.03deg);">Μήνα</span>
<span class="t" style="top:353.8px;font-size:10px;line-height:11px;left:865.22px;transform-origin:50% 0;transform:scaleX(0.8180) rotate(0.03deg);">0</span>
<div class="cb" style="left:330.5px;top:354px"></div>
<div class="cb" style="left:611px;top:354px"><svg width="7.6" height="6" viewBox="0 0 7.6 6"><path d="M1.2 2.4 L3 4.2 L6.8 0.8" stroke="#000" stroke-width="1.6" fill="none"/></svg></div>
<div class="cb" style="left:908.5px;top:354px"></div>
<div class="c desc sel" style="left:4px;top:367px;width:315px;height:16px;"></div>
<div class="c yel" style="left:319px;top:367px;width:34px;height:16px;"></div>
<div class="c btn ybtn" style="left:353.3px;top:367.2px;width:93.39999999999998px;height:15.100000000000023px;"></div>
<div class="c gray" style="left:448px;top:367px;width:52.5px;height:16px;"></div>
<div class="c gray" style="left:500.5px;top:367px;width:53.0px;height:16px;"></div>
<div class="c btn" style="left:553.8px;top:367.2px;width:44.600000000000136px;height:15.100000000000023px;"></div>
<div class="c" style="left:599.7px;top:367px;width:34.299999999999955px;height:16px;"></div>
<div class="c btn" style="left:634.3px;top:367.2px;width:74.40000000000009px;height:15.100000000000023px;"></div>
<div class="c" style="left:710px;top:367px;width:56.200000000000045px;height:16px;"></div>
<div class="c btn" style="left:766.5px;top:367.2px;width:74.20000000000005px;height:15.100000000000023px;"></div>
<div class="c" style="left:842px;top:367px;width:53.299999999999955px;height:16px;"></div>
<div class="c" style="left:895.3px;top:367px;width:37.700000000000045px;height:16px;"></div>
<div class="c btn" style="left:933.3px;top:367.2px;width:73.80000000000007px;height:15.100000000000023px;"></div>
<span class="t" style="top:369.1px;font-size:10px;line-height:11px;left:7.2px;transform:scaleX(0.8846) rotate(0.03deg);">Έλεγχος Φωτισμού του Φρεατίου</span>
<span class="t" style="top:369.0px;font-size:10px;line-height:11px;left:358.5px;transform:scaleX(0.8935) rotate(0.03deg);">Φρεάτιο 1</span>
<span class="t" style="top:369.40000000000003px;font-size:10px;line-height:11px;left:463.18px;transform-origin:50% 0;transform:scaleX(0.8180) rotate(0.03deg);">4080</span>
<span class="t" style="top:369.40000000000003px;font-size:10px;line-height:11px;left:516.17px;transform-origin:50% 0;transform:scaleX(0.8180) rotate(0.03deg);">4090</span>
<span class="t" style="top:368.90000000000003px;font-size:10px;line-height:11px;left:565.08px;transform-origin:50% 0;transform:scaleX(0.8180) rotate(0.03deg);">4014</span>
<span class="t" style="top:368.90000000000003px;font-size:10px;line-height:11px;left:667.82px;transform-origin:50% 0;transform:scaleX(0.8180) rotate(0.03deg);">6</span>
<span class="t" style="top:369.8px;font-size:10px;line-height:11px;left:731.44px;transform-origin:50% 0;transform:scaleX(0.8180) rotate(0.03deg);">90</span>
<span class="t" style="top:369.3px;font-size:10px;line-height:11px;left:790.16px;transform-origin:50% 0;transform:scaleX(0.8101) rotate(0.03deg);">Μήνα</span>
<span class="t" style="top:369.8px;font-size:10px;line-height:11px;left:865.22px;transform-origin:50% 0;transform:scaleX(0.8180) rotate(0.03deg);">0</span>
<div class="cb" style="left:330.5px;top:370px"></div>
<div class="cb" style="left:611px;top:370px"><svg width="7.6" height="6" viewBox="0 0 7.6 6"><path d="M1.2 2.4 L3 4.2 L6.8 0.8" stroke="#000" stroke-width="1.6" fill="none"/></svg></div>
<div class="cb" style="left:908.5px;top:370px"></div>
<div class="c desc" style="left:4px;top:383px;width:315px;height:16px;"></div>
<div class="c yel" style="left:319px;top:383px;width:34px;height:16px;"></div>
<div class="c btn ybtn" style="left:353.3px;top:383.2px;width:93.39999999999998px;height:15.100000000000023px;"></div>
<div class="c gray" style="left:448px;top:383px;width:52.5px;height:16px;"></div>
<div class="c gray" style="left:500.5px;top:383px;width:53.0px;height:16px;"></div>
<div class="c btn" style="left:553.8px;top:383.2px;width:44.600000000000136px;height:15.100000000000023px;"></div>
<div class="c" style="left:599.7px;top:383px;width:34.299999999999955px;height:16px;"></div>
<div class="c btn" style="left:634.3px;top:383.2px;width:74.40000000000009px;height:15.100000000000023px;"></div>
<div class="c" style="left:710px;top:383px;width:56.200000000000045px;height:16px;"></div>
<div class="c btn" style="left:766.5px;top:383.2px;width:74.20000000000005px;height:15.100000000000023px;"></div>
<div class="c" style="left:842px;top:383px;width:53.299999999999955px;height:16px;"></div>
<div class="c" style="left:895.3px;top:383px;width:37.700000000000045px;height:16px;"></div>
<div class="c btn" style="left:933.3px;top:383.2px;width:73.80000000000007px;height:15.100000000000023px;"></div>
<span class="t" style="top:385.1px;font-size:10px;line-height:11px;left:7.2px;transform:scaleX(0.8258) rotate(0.03deg);">Λάδωμα των Οδηγών</span>
<span class="t" style="top:385.0px;font-size:10px;line-height:11px;left:358.5px;transform:scaleX(0.8656) rotate(0.03deg);">θάλαμος</span>
<span class="t" style="top:385.40000000000003px;font-size:10px;line-height:11px;left:459.79px;transform-origin:50% 0;transform:scaleX(0.8180) rotate(0.03deg);">90080</span>
<span class="t" style="top:385.40000000000003px;font-size:10px;line-height:11px;left:512.59px;transform-origin:50% 0;transform:scaleX(0.8180) rotate(0.03deg);">90090</span>
<span class="t" style="top:384.90000000000003px;font-size:10px;line-height:11px;left:565.08px;transform-origin:50% 0;transform:scaleX(0.8180) rotate(0.03deg);">4043</span>
<span class="t" style="top:384.90000000000003px;font-size:10px;line-height:11px;left:665.04px;transform-origin:50% 0;transform:scaleX(0.8180) rotate(0.03deg);">41</span>
<span class="t" style="top:385.8px;font-size:10px;line-height:11px;left:731.44px;transform-origin:50% 0;transform:scaleX(0.8180) rotate(0.03deg);">30</span>
<span class="t" style="top:385.3px;font-size:10px;line-height:11px;left:790.16px;transform-origin:50% 0;transform:scaleX(0.8101) rotate(0.03deg);">Μήνα</span>
<span class="t" style="top:385.8px;font-size:10px;line-height:11px;left:865.22px;transform-origin:50% 0;transform:scaleX(0.8180) rotate(0.03deg);">0</span>
<div class="cb" style="left:330.5px;top:386px"></div>
<div class="cb" style="left:611px;top:386px"></div>
<div class="cb" style="left:908.5px;top:386px"></div>

<!-- search dropdown + button -->
<div class="abs" style="left:993px;top:113.3px;width:12px;height:19.3px;background:linear-gradient(#f3f4fa,#e6e8f3)"></div>
<svg class="abs" style="left:997.2px;top:122.3px" width="4.6" height="2.8" viewBox="0 0 46 28"><path d="M0 0H46L23 28Z" fill="#1a237e"/></svg>
<div class="abs" style="left:1006.5px;top:114px;width:13px;height:19px;background:linear-gradient(#dff0fc,#c4dcf6 30%,#a9ccf2 45%,#bcdaf7 70%,#cfe7fb);border-radius:2px"></div>
<div class="abs" style="left:1010.5px;top:126px;width:1.2px;height:1.2px;background:#6a6ad0;box-shadow:2.2px 0 0 #6a6ad0,4.4px 0 0 #6a6ad0;opacity:.7"></div>
<!-- scrollbar -->
<div class="abs" style="left:1008.3px;top:136.8px;width:13px;height:268.8px;background:#7fa0d5"></div>
<svg class="abs" style="left:1011.8px;top:140.3px" width="7.2" height="4" viewBox="0 0 8 5"><path d="M0 4.5L4 0.5L8 4.5Z" fill="#4a5f86"/></svg>
<svg class="abs" style="left:1012.2px;top:398.2px" width="6.8" height="4" viewBox="0 0 8 5"><path d="M0 0.5L4 4.5L8 0.5Z" fill="#4a5f86"/></svg>
<div class="abs" style="left:1009.6px;top:327.5px;width:12px;height:65.5px;background:linear-gradient(90deg,#eef2fa,#dde6f4 45%,#c3d4ee 80%,#cddbf1);border:1px solid #9fb3d6;border-radius:2px"></div>
<div class="abs" style="left:1012px;top:357.5px;width:7px;height:1.2px;background:#9aa6bc;box-shadow:0 2px 0 #9aa6bc,0 4px 0 #9aa6bc"></div>
<!-- bottom left panel -->
<div class="abs" style="left:4px;top:405.6px;width:1017.3px;height:94.4px;background:#f0f0f0"></div>
<div class="abs" style="left:4px;top:405.7px;width:538.2px;height:93.3px;background:#00bfff;border:1px solid #b9e6fa;border-radius:5px"></div>
<div class="abs" style="left:7.4px;top:422.6px;width:531px;height:72.6px;background:#fff;border-radius:0 0 2px 2px"></div>
<div class="abs" style="left:526px;top:423.2px;width:12.3px;height:72px;background:#f0f0f0"></div>
<div class="abs hdr" style="left:7.8px;top:410.2px;width:530.3px;height:13px"></div>
<!-- textarea scrollbar -->
<svg class="abs" style="left:528.7px;top:429px" width="6.4" height="4" viewBox="0 0 64 40"><path d="M4 36L32 6L60 36" stroke="#bdbdbd" stroke-width="11" fill="none"/></svg>
<svg class="abs" style="left:528.7px;top:485.5px" width="6.4" height="4" viewBox="0 0 64 40"><path d="M4 4L32 34L60 4" stroke="#bdbdbd" stroke-width="11" fill="none"/></svg>
<!-- auto checkbox -->
<div class="abs" style="left:543.3px;top:415px;width:9.6px;height:10px;background:#e6e6e6;border:1px solid #ccd6e4;box-shadow:inset 0 0 0 1px #f4f4f4,inset 0 0 0 2px #d4d4d4"></div>
<!-- bottom bar -->
<div class="abs" style="left:4.2px;top:499.5px;width:1016.7px;height:33.3px;background:#c8c8c8;border:1px solid #8fa8d6;border-radius:5px"></div>
<div class="abs" style="left:8.8px;top:505.5px;width:1008.4px;height:20.9px;background:#a9a9a9;border-radius:2px"></div>
<!-- icons -->
<svg class="abs" style="left:496.6px;top:509.4px" width="14.8" height="15.2" viewBox="0 0 14.8 15.2">
<defs><linearGradient id="gb" x1="0" y1="0" x2="0.6" y2="1"><stop offset="0" stop-color="#4f68c8"/><stop offset=".35" stop-color="#8db7ec"/><stop offset=".6" stop-color="#3f8ee6"/><stop offset="1" stop-color="#1f6fd8"/></linearGradient>
<linearGradient id="go" x1="0" y1="0" x2="0.7" y2="1"><stop offset="0" stop-color="#f9c884"/><stop offset=".4" stop-color="#f3a040"/><stop offset="1" stop-color="#e5861c"/></linearGradient></defs>
<ellipse cx="7.4" cy="14.2" rx="4.6" ry=".7" fill="#3a3a4a" opacity=".75"/>
<path d="M0.9 7.2A6.5 6.5 0 0 1 13.9 7.2" stroke="#f2f2f2" stroke-width="1" fill="none" opacity=".9"/>
<circle cx="7.4" cy="7.5" r="6" fill="url(#gb)" stroke="#2c40ac" stroke-width=".8"/>
<path d="M3.4 7.6L6.6 10.8L11.6 5.6" stroke="#fff" stroke-width="2.3" fill="none"/>
</svg>
<svg class="abs" style="left:514.7px;top:509.4px" width="14.8" height="15.2" viewBox="0 0 14.8 15.2">
<ellipse cx="7.4" cy="14.2" rx="4.6" ry=".7" fill="#3a3a4a" opacity=".75"/>
<path d="M0.9 7.2A6.5 6.5 0 0 1 13.9 7.2" stroke="#f2f2f2" stroke-width="1" fill="none" opacity=".9"/>
<circle cx="7.4" cy="7.5" r="6" fill="url(#go)" stroke="#b06a1c" stroke-width=".8"/>
<path d="M4.2 11.2L11 5.3" stroke="#fff" stroke-width="2.2" fill="none"/>
</svg>
<!-- chevrons -->
<svg class="abs chv" style="left:1007px;top:33px" width="5" height="6.4" viewBox="0 0 6 8"><path d="M0.5 3.5L3 1L5.5 3.5M0.5 7L3 4.5L5.5 7" stroke="#1f2c7c" stroke-width="1.5" fill="none"/></svg>
<svg class="abs chv" style="left:1007px;top:75.5px" width="5" height="6.4" viewBox="0 0 6 8"><path d="M0.5 3.5L3 1L5.5 3.5M0.5 7L3 4.5L5.5 7" stroke="#1f2c7c" stroke-width="1.5" fill="none"/></svg>
<svg class="abs chv" style="left:527px;top:413.5px" width="5" height="6.4" viewBox="0 0 6 8"><path d="M0.5 3.5L3 1L5.5 3.5M0.5 7L3 4.5L5.5 7" stroke="#1f2c7c" stroke-width="1.5" fill="none"/></svg>
<span class="t" style="top:4.6px;font-size:10px;line-height:12px;color:#989898;left:6.4px;transform:scaleX(0.9410) rotate(0.03deg);">Τύποι Θεμάτων</span>
<span class="t" style="top:31.4px;font-size:10px;line-height:12px;font-weight:bold;color:#86ecff;left:485.27px;transform-origin:50% 0;transform:scaleX(0.9344) rotate(0.03deg);">Ανά Έτη</span>
<span class="t" style="top:74.3px;font-size:10px;line-height:12px;font-weight:bold;color:#86ecff;left:480.65px;transform-origin:50% 0;transform:scaleX(0.8251) rotate(0.03deg);">Ανα τμήμα</span>
<span class="t" style="top:115.2px;font-size:10.5px;line-height:12px;font-weight:bold;color:#6a6a6a;left:9.3px;transform:scaleX(0.9316) rotate(0.03deg);">Αναζητήστε εδώ</span>
<span class="t" style="top:412.2px;font-size:10px;line-height:12px;color:#7ceaff;left:202.01px;transform-origin:50% 0;transform:scaleX(0.8946) rotate(0.03deg);">Οδηγίες προς τους τεχνικούς</span>
<span class="t" style="top:424.2px;font-size:10px;line-height:11px;left:10px;transform:scaleX(0.8678) rotate(0.03deg);">Ελέγχουμε αν Ανάβουν όλες οι Λάμπες του Φωτισμού Φρεατίου</span>
<span class="t" style="top:424.2px;font-size:10px;line-height:11px;left:257px;transform:scaleX(0.8561) rotate(0.03deg);">και Όπου Απαιτείται Αλλάζουμε Λάμπα ή</span>
<span class="t" style="top:424.2px;font-size:10px;line-height:11px;left:413.75px;transform:scaleX(0.8288) rotate(0.03deg);">Επισκευάζουμε το Πρόβλημα</span>
<span class="t" style="top:414.6px;font-size:10px;line-height:11px;color:#1f4e9c;left:556.4px;transform:scaleX(0.8560) rotate(0.03deg);">Αυτόματος υπολογισμός ημερών, ανάλογα με την συχνότητα συντήρησης</span>
</body></html>
